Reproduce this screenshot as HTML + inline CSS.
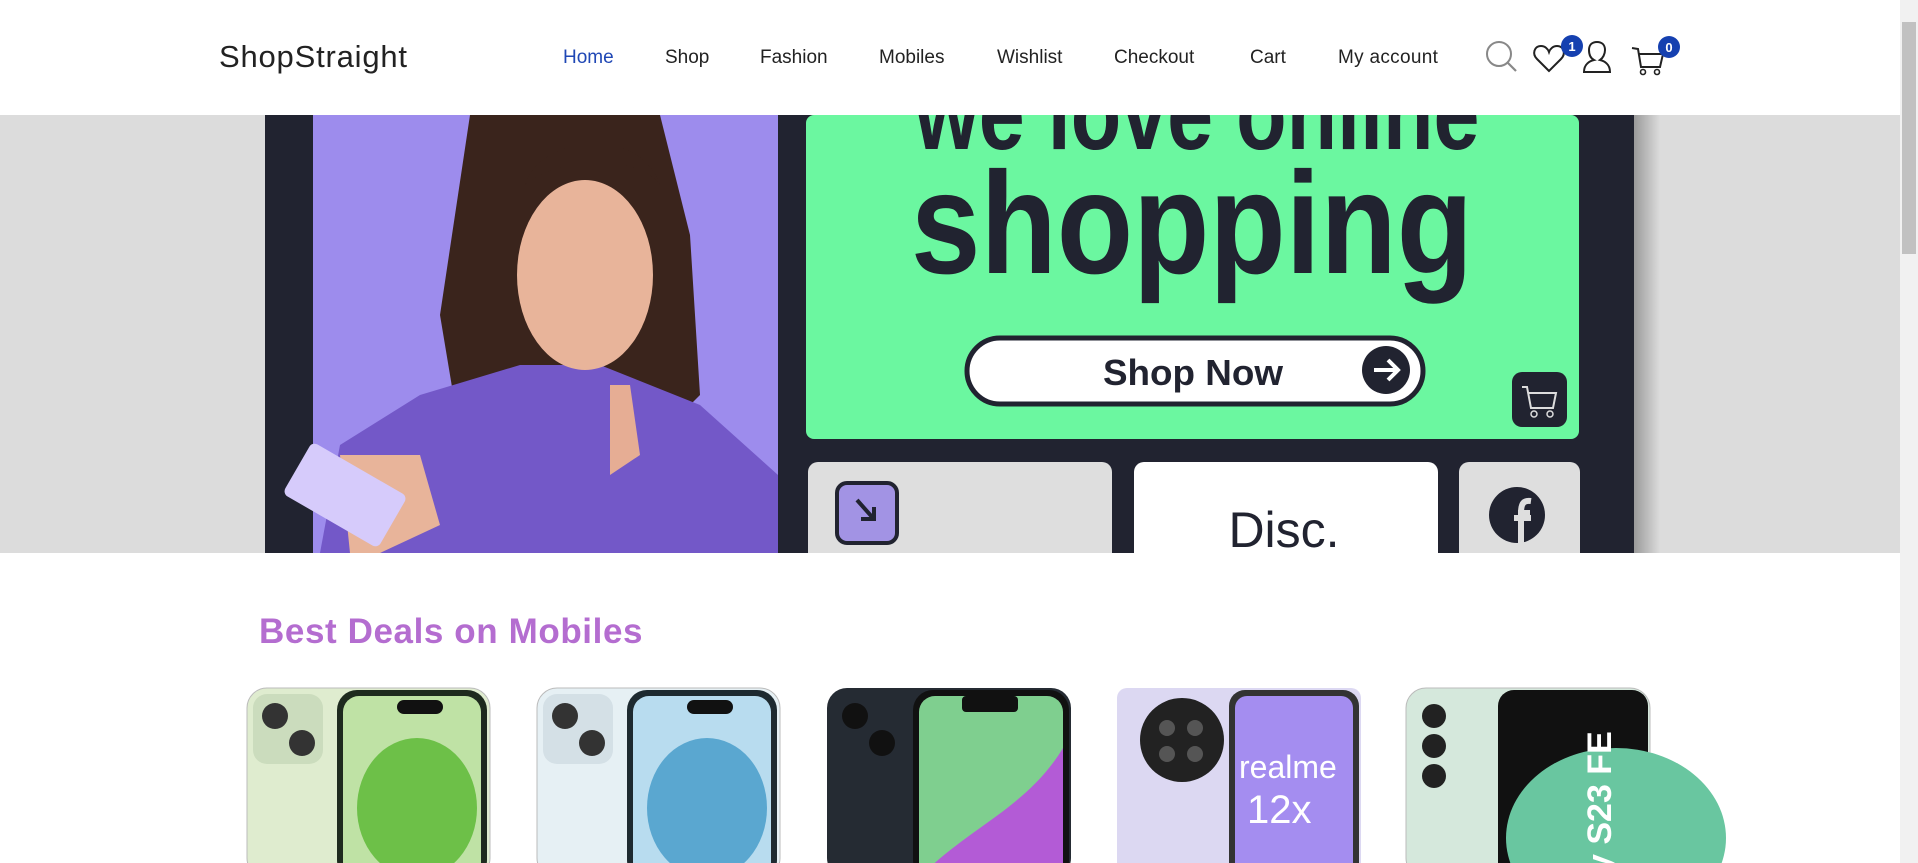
<!DOCTYPE html>
<html><head><meta charset="utf-8"><style>
html,body{margin:0;padding:0;width:1918px;height:863px;overflow:hidden;background:#fff;font-family:"Liberation Sans",sans-serif;}
.abs{position:absolute}
.nav a{position:absolute;top:47px;font-size:19px;color:#222;text-decoration:none}
</style></head><body>
<div class="abs" style="left:0;top:0;width:1900px;height:115px;background:#fff"></div>
<div class="abs" style="left:219px;top:39px;font-size:31px;color:#222;letter-spacing:0.8px">ShopStraight</div>
<div class="nav">
<a style="left:563px;color:#1f47b5">Home</a>
<a style="left:665px">Shop</a>
<a style="left:760px">Fashion</a>
<a style="left:879px">Mobiles</a>
<a style="left:997px">Wishlist</a>
<a style="left:1114px">Checkout</a>
<a style="left:1250px">Cart</a>
<a style="left:1338px;letter-spacing:0.3px">My account</a>
</div>
<svg class="abs" style="left:1480px;top:30px" width="200" height="50" viewBox="0 0 200 50">
<circle cx="19" cy="24" r="12" fill="none" stroke="#888" stroke-width="2"/>
<line x1="28" y1="33" x2="36" y2="41" stroke="#888" stroke-width="2.2"/>
<path d="M69 41 L57 29 C52 24 54 16 61 16 C65 16 68 19 69 22 C70 19 73 16 77 16 C84 16 86 24 81 29 Z" fill="none" stroke="#222" stroke-width="2"/>
<circle cx="92" cy="16" r="11" fill="#1540b0"/><text x="92" y="21" font-size="13" font-weight="bold" fill="#fff" text-anchor="middle" font-family="Liberation Sans">1</text>
<path d="M104 42 C104 34 110 31 114 30 C110 28 109 24 109 20 C109 15 112 12 117 12 C122 12 125 15 125 20 C125 24 123 28 120 30 C124 31 130 34 130 42 Z" fill="none" stroke="#222" stroke-width="2"/>
<path d="M152 18 L158 19 L161 37 L180 37 L183 24 L159 24" fill="none" stroke="#222" stroke-width="2"/>
<circle cx="163" cy="42" r="2.5" fill="none" stroke="#222" stroke-width="1.6"/><circle cx="177" cy="42" r="2.5" fill="none" stroke="#222" stroke-width="1.6"/>
<circle cx="189" cy="17" r="11" fill="#1540b0"/><text x="189" y="22" font-size="13" font-weight="bold" fill="#fff" text-anchor="middle" font-family="Liberation Sans">0</text>
</svg>
<div class="abs" style="left:0;top:115px;width:1900px;height:438px;background:#dcdcdc;overflow:hidden">
<svg width="1900" height="438" viewBox="0 0 1900 438" style="display:block">
<defs><linearGradient id="sh" x1="0" x2="1"><stop offset="0" stop-color="#000" stop-opacity=".3"/><stop offset="1" stop-color="#000" stop-opacity="0"/></linearGradient></defs>
<rect x="1634" y="0" width="26" height="438" fill="url(#sh)"/>
<rect x="265" y="0" width="1369" height="438" fill="#212330"/>
<rect x="313" y="0" width="465" height="438" fill="#9d8ced"/>
<path d="M470 0 L660 0 L690 120 L700 280 L660 320 L460 320 L440 200 Z" fill="#3a241c"/>
<path d="M320 438 L340 330 L420 280 L520 250 L600 250 L700 290 L778 360 L778 438 Z" fill="#7358c8"/>
<ellipse cx="585" cy="160" rx="68" ry="95" fill="#e8b49a"/>
<path d="M525 70 C540 20 640 10 660 70 C640 40 560 40 525 70 Z" fill="#3a241c"/>
<path d="M610 270 L630 270 L640 340 L610 360 Z" fill="#e6ad94"/>
<path d="M340 340 L420 340 L440 410 L380 438 L350 438 Z" fill="#e8b49a"/>
<rect x="290" y="350" width="110" height="60" rx="6" fill="#d6cbfb" transform="rotate(30 345 380)"/>
<rect x="806" y="0" width="773" height="324" rx="8" fill="#6bf7a0"/>
<text x="1197" y="34" text-anchor="middle" font-family="Liberation Sans" font-weight="bold" font-size="105" fill="#212330" textLength="565" lengthAdjust="spacingAndGlyphs">we love online</text>
<text x="1192" y="158" text-anchor="middle" font-family="Liberation Sans" font-weight="bold" font-size="145" fill="#212330" textLength="562" lengthAdjust="spacingAndGlyphs">shopping</text>
<rect x="967" y="223" width="456" height="66" rx="33" fill="#fff" stroke="#212330" stroke-width="5"/>
<text x="1193" y="270" text-anchor="middle" font-family="Liberation Sans" font-weight="bold" font-size="36" fill="#212330" textLength="180" lengthAdjust="spacingAndGlyphs">Shop Now</text>
<circle cx="1386" cy="255" r="24" fill="#212330"/>
<path d="M1374 255 L1397 255 M1388 245 L1398 255 L1388 265" stroke="#fff" stroke-width="4" fill="none"/>
<rect x="1512" y="257" width="55" height="55" rx="10" fill="#212330"/>
<path d="M1522 272 L1527 272 L1531 293 L1553 293 L1556 278 L1528 278" stroke="#ddd" stroke-width="2" fill="none"/>
<circle cx="1534" cy="299" r="3" fill="none" stroke="#ddd" stroke-width="1.5"/><circle cx="1550" cy="299" r="3" fill="none" stroke="#ddd" stroke-width="1.5"/>
<rect x="808" y="347" width="304" height="120" rx="10" fill="#dedede"/>
<rect x="837" y="368" width="60" height="60" rx="10" fill="#a293e4" stroke="#212330" stroke-width="4"/>
<path d="M857 385 L873 403 M861 404 L874 404 L874 392" stroke="#212330" stroke-width="4" fill="none"/>
<rect x="1134" y="347" width="304" height="120" rx="10" fill="#fff"/>
<text x="1284" y="432" text-anchor="middle" font-family="Liberation Sans" font-size="50" fill="#212330">Disc.</text>
<rect x="1459" y="347" width="121" height="120" rx="10" fill="#dedede"/>
<circle cx="1517" cy="400" r="28" fill="#212330"/>
<path d="M1521 430 L1521 398 L1530 398 M1514 403 L1531 403 M1521 398 C1521 388 1524 385 1531 386" stroke="#dedede" stroke-width="6" fill="none"/>
</svg></div>
<div class="abs" style="left:259px;top:612px;font-size:35px;font-weight:bold;color:#b46dd0;letter-spacing:0.6px">Best Deals on Mobiles</div>
<svg class="abs" style="left:0;top:680px" width="1900" height="183" viewBox="0 0 1900 183">
<g transform="translate(247,8)">
<rect x="0" y="0" width="243" height="190" rx="20" fill="#dfeccf" stroke="#bbb"/><rect x="90" y="2" width="150" height="190" rx="20" fill="#1e2a1e"/><rect x="96" y="8" width="138" height="190" rx="16" fill="#bfe2a5"/>
<rect x="150" y="12" width="46" height="14" rx="7" fill="#111"/><ellipse cx="170" cy="120" rx="60" ry="70" fill="#6dc048"/><rect x="6" y="6" width="70" height="70" rx="14" fill="#cbdcbd"/><circle cx="28" cy="28" r="13" fill="#333"/><circle cx="55" cy="55" r="13" fill="#333"/></g>
<g transform="translate(537,8)">
<rect x="0" y="0" width="243" height="190" rx="20" fill="#e6f0f4" stroke="#bbb"/><rect x="90" y="2" width="150" height="190" rx="20" fill="#1e2a30"/><rect x="96" y="8" width="138" height="190" rx="16" fill="#b8dcef"/>
<rect x="150" y="12" width="46" height="14" rx="7" fill="#111"/><ellipse cx="170" cy="120" rx="60" ry="70" fill="#5aa7d0"/><rect x="6" y="6" width="70" height="70" rx="14" fill="#d4e0e6"/><circle cx="28" cy="28" r="13" fill="#333"/><circle cx="55" cy="55" r="13" fill="#333"/></g>
<g transform="translate(827,8)">
<rect x="0" y="0" width="244" height="190" rx="20" fill="#252b33"/><rect x="86" y="2" width="156" height="190" rx="20" fill="#111"/><rect x="92" y="8" width="144" height="190" rx="16" fill="#7fcf8f"/>
<path d="M92 190 C140 140 200 120 236 60 L236 190 Z" fill="#b35bd6"/><rect x="135" y="8" width="56" height="16" rx="4" fill="#111"/><circle cx="28" cy="28" r="13" fill="#111"/><circle cx="55" cy="55" r="13" fill="#111"/></g>
<g transform="translate(1117,8)">
<rect x="0" y="0" width="244" height="190" rx="10" fill="#dcd8f2"/><rect x="112" y="2" width="130" height="190" rx="16" fill="#333"/><rect x="118" y="8" width="118" height="190" rx="12" fill="#a48df0"/>
<circle cx="65" cy="52" r="42" fill="#222"/><circle cx="50" cy="40" r="8" fill="#555"/><circle cx="78" cy="40" r="8" fill="#555"/><circle cx="50" cy="66" r="8" fill="#555"/><circle cx="78" cy="66" r="8" fill="#555"/>
<text x="122" y="90" font-family="Liberation Sans" font-size="32" fill="#fff">realme</text><text x="130" y="135" font-family="Liberation Sans" font-size="40" fill="#fff">12x</text></g>
<g transform="translate(1406,8)">
<rect x="0" y="0" width="244" height="190" rx="20" fill="#d5e8dc" stroke="#bbb"/><rect x="92" y="2" width="150" height="190" rx="16" fill="#111"/>
<ellipse cx="210" cy="150" rx="110" ry="90" fill="#69c6a0"/><circle cx="28" cy="28" r="12" fill="#222"/><circle cx="28" cy="58" r="12" fill="#222"/><circle cx="28" cy="88" r="12" fill="#222"/>
<text transform="translate(205,185) rotate(-90)" font-family="Liberation Sans" font-weight="bold" font-size="34" fill="#fff">y S23 FE</text></g>
</svg>
<div class="abs" style="left:1900px;top:0;width:18px;height:863px;background:#f1f1f1"></div>
<div class="abs" style="left:1902px;top:22px;width:14px;height:232px;background:#c1c1c1"></div>
</body></html>
